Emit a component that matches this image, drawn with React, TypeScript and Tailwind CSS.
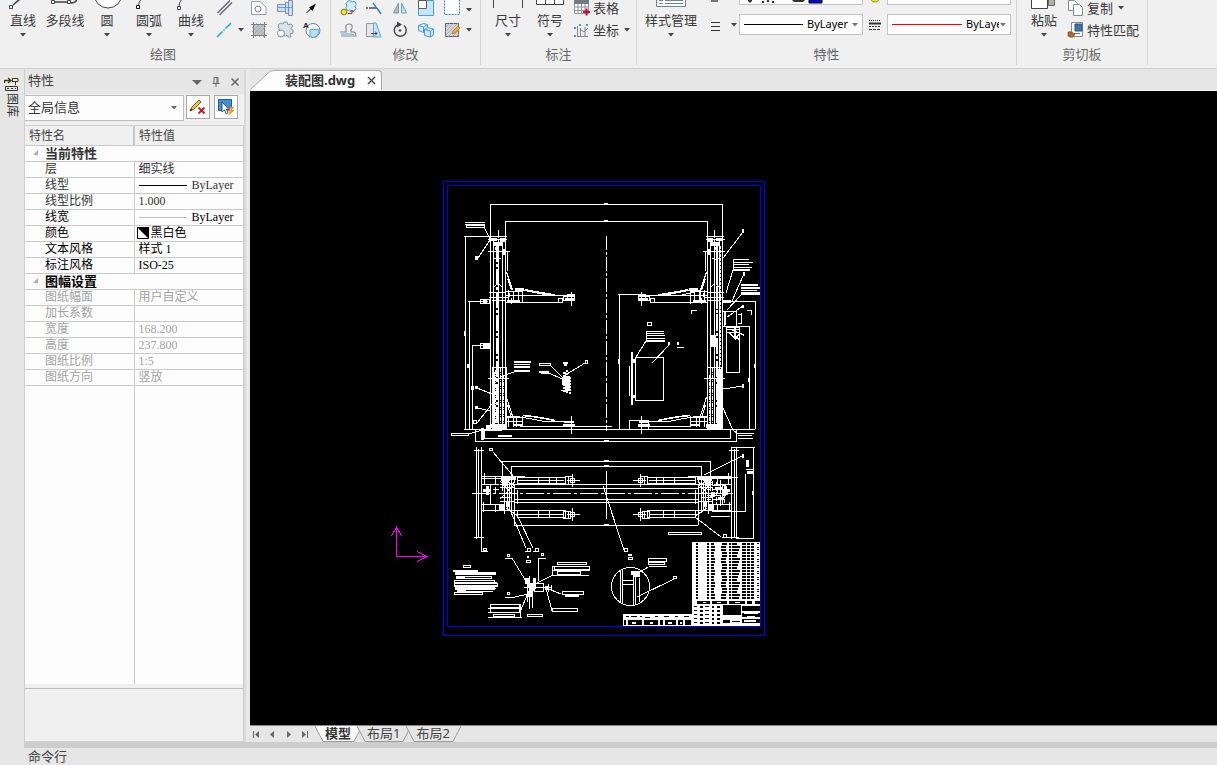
import React from "react";

type Kids = { children?: React.ReactNode };

const INK = "#3d4550";

function Caret({ className = "text-[#444]" }: { className?: string }) {
  return (
    <svg width="6" height="4" viewBox="0 0 6 4" className={`shrink-0 ${className}`} aria-hidden="true">
      <path d="M0 0h6L3 3.6z" fill="currentColor" />
    </svg>
  );
}

function Icon({ children }: Kids) {
  return (
    <svg width="20" height="20" viewBox="0 0 20 20" fill="none" className="block shrink-0" aria-hidden="true">
      {children}
    </svg>
  );
}

function Group({ title, children, className }: Kids & { title: string; className: string }) {
  return (
    <section className={`flex flex-col shrink-0 ${className}`}>
      <div className="flex h-11 items-start overflow-hidden">{children}</div>
      <h2 className="text-center text-[13px] leading-5 text-[#666]">{title}</h2>
    </section>
  );
}

function Divider() {
  return <div className="h-[65px] w-px shrink-0 bg-[#d4d4d4]" />;
}

function BigButton({ label, caret = true, wide = false, children }: Kids & { label: string; caret?: boolean; wide?: boolean }) {
  return (
    <button type="button" className={`flex shrink-0 flex-col items-center ${wide ? "w-[60px]" : "w-[42px]"}`}>
      <svg width="40" height="10" viewBox="0 0 40 10" fill="none" stroke={INK} className="block" aria-hidden="true">
        {children}
      </svg>
      <span className="whitespace-nowrap text-[13px] leading-[20px] text-[#3b3b3b]">{label}</span>
      <span className="mt-[3px]">{caret && <Caret />}</span>
    </button>
  );
}

function Tool({ label, children, caret }: Kids & { label: string; caret?: boolean }) {
  return (
    <button type="button" aria-label={label} className="flex h-5 items-center justify-center gap-1">
      <Icon>{children}</Icon>
      {caret && <Caret />}
    </button>
  );
}

function Hatch() {
  return <path d="M3 8l5-5M3 12l9-9M3 16l13-13M6 17l11-11M10 17l7-7M14 17l3-3" stroke="#9ba0a6" strokeWidth=".7" />;
}

function DrawGroup() {
  return (
    <Group title="绘图" className="w-[330px] pr-1">
      <div className="flex pl-0.5">
        <BigButton label="直线">
          <path d="M10 5l7-6" strokeWidth="1.6" />
          <path d="M6.500 5.500h3v3h-3z" fill="#fff" />
        </BigButton>
        <BigButton label="多段线" caret={false}>
          <path d="M10 2h12M26 3q5 0 6-4" strokeWidth="1.500" />
          <path d="M6.500.5h3v3h-3zM22.500.5h3v3h-3z" fill="#fff" />
        </BigButton>
        <BigButton label="圆">
          <circle cx="21" cy="-6" r="14" fill="#fff" />
        </BigButton>
        <BigButton label="圆弧">
          <path d="M9.500 6q0-4 3-7" />
          <path d="M7.500 5.500h3v3h-3z" fill="#fff" stroke="#111" />
        </BigButton>
        <BigButton label="曲线">
          <path d="M8 6q0-4 3-7" />
          <path d="M6.500 6.500h3v3h-3z" fill="#fff" />
        </BigButton>
      </div>
      <div className="flex">
        <div className="ml-0.5 flex w-8 flex-col items-start">
          <Tool label="平行线">
            <path d="M3.500 13L16 .5M5.500 15L18 2.500" stroke="#666b72" strokeWidth="1.500" />
          </Tool>
          <Tool label="中心线" caret>
            <path d="M3 17l5.500-5.500M9.500 10.500l1-1M11.500 8.500L17 3" stroke="#2aa5dc" strokeWidth="1.500" />
          </Tool>
        </div>
        <div className="grid grid-cols-[26px_26px_26px]">
          <Tool label="局部放大">
            <path d="M2.500 1.500H11l6 5.500v7.500H2.500z" fill="#fdfdfd" stroke="#9aa0a8" />
            <circle cx="9" cy="9" r="3" stroke="#7c838b" />
          </Tool>
          <Tool label="轴">
            <path d="M2.500 4.500h8v7h-8zM10.500 2.500h3v11h-3zM13.500.5h4v15h-4z" fill="#cfdcea" stroke="#7a92ad" />
            <path d="M2 7.500h15" stroke="#52a5e0" />
          </Tool>
          <Tool label="箭头">
            <path d="M5.500 13l6-6" stroke="#000" />
            <path d="M15 3.500L8 7.500l3.500 3.500z" fill="#000" />
          </Tool>
          <Tool label="剖面线">
            <path d="M4 4h12v12H4z" fill="#bfc2c5" />
            <Hatch />
            <path d="M4.500 2v16M15.500 2v16M2 4.500h16M2 15.500h16" stroke="#7c8288" />
          </Tool>
          <Tool label="齿轮">
            <path d="M4 4l2-1 2 1 1-2h3l1 3 3-1 2 2-2 2v1l2 1v3l-3 1 1 3h-3l-1-2-2 1-3-1 1-3-4-2V8L3 7z" fill="#d9e1e9" stroke="#8795a5" />
            <circle cx="6" cy="13.500" r="3.500" fill="#f6f8fa" stroke="#8795a5" />
          </Tool>
          <Tool label="文字">
            <circle cx="12" cy="10.500" r="7" fill="#f4f8fb" stroke="#74808c" />
            <path d="M9 9.500h9q0 7-6 8-3-1-3-2z" fill="#b5e0f7" stroke="#56a9d8" />
            <text x="2" y="8" fontSize="8" fontWeight="700" fontFamily="Liberation Sans" fill="#222">A</text>
          </Tool>
        </div>
      </div>
    </Group>
  );
}

function ModifyGroup() {
  return (
    <Group title="修改" className="w-[149px]">
      <div className="grid grid-cols-[26px_26px_26px_26px_36px] pl-1">
        <Tool label="复制">
          <path d="M9 6a3 3 0 015-4 2.500 2.500 0 013 4 3 3 0 01-5 4 2.500 2.500 0 01-3-4z" fill="#d8effb" stroke="#4b9bcb" />
          <circle cx="6" cy="12" r="2.800" fill="#ffe81a" stroke="#8c7a12" />
          <path d="M10 13.500h4V11M12.500 12l1.500-2 1.500 2" stroke="#a33" />
        </Tool>
        <Tool label="修剪">
          <path d="M2 8h2M5 8h8" stroke="#4a4f57" strokeWidth="1.500" />
          <path d="M9 3l3 4M13 8l4 6" stroke="#2f86c4" strokeWidth="1.500" />
        </Tool>
        <Tool label="镜像">
          <path d="M8.500 3v10h-5z" fill="#b9bec4" stroke="#8d939a" />
          <path d="M11.500 3v10h5z" fill="#bfe3f7" stroke="#5ba5cf" />
        </Tool>
        <Tool label="缩放">
          <path d="M2.500.5h15v15h-15z" fill="#c5e6f9" stroke="#4c9ccc" />
          <path d="M2.500.5h8v8h-8z" fill="#fff" stroke="#555b63" />
        </Tool>
        <Tool label="阵列" caret>
          <path d="M2.500-.5h15v15h-15z" fill="#fff" stroke="#318bc5" strokeDasharray="2 1" />
        </Tool>
        <Tool label="偏移">
          <path d="M2 12h6V9q-1-5 3-5t3 4l-1 2v2q5-1 5 4H3" stroke="#858c94" strokeWidth="1.200" />
          <path d="M3 14h9q3 0 4 1" stroke="#5aa9d6" />
        </Tool>
        <Tool label="拉伸">
          <path d="M9 3h3l5 14H9z" fill="#c5e6f9" stroke="#5ba5cf" />
          <path d="M2.500 3.500h7v13h-7z" fill="#e3e6e9" stroke="#9199a2" />
          <path d="M7 13.500h6M11 11.500l2 2-2 2" stroke="#3f4750" />
        </Tool>
        <Tool label="旋转">
          <path d="M7 5.200A6 6 0 1014 5.500" stroke="#3f434a" strokeWidth="1.400" />
          <path d="M7 1.500l5 3-5 3z" fill="#3f434a" />
          <circle cx="10" cy="10.500" r="1.300" fill="#3f434a" />
        </Tool>
        <Tool label="分解">
          <path d="M2.500 5.500l5-2 4 1v5l-4 3-5-2zM2.500 5.500l5 1.500 4-2.500M7.500 7v5" fill="#cdeafa" stroke="#4b9bcb" />
          <path d="M8.500 9.500l3-2 6 1.500v6l-3 2-6-1.500zM8.500 9.500l6 1.500 3-2M14.500 11v6" fill="#cdeafa" stroke="#4b9bcb" />
        </Tool>
        <Tool label="编辑剖面线" caret>
          <path d="M3.500 3.500h13v13h-13z" fill="#d4d6d8" stroke="#5c6269" />
          <Hatch />
          <path d="M10 14l1-3 5-5 2 2-5 5z" fill="#f3a52c" stroke="#b16b16" strokeWidth=".6" />
        </Tool>
      </div>
    </Group>
  );
}

function TextTool({ label, caret, children }: Kids & { label: string; caret?: boolean }) {
  return (
    <button type="button" className="flex h-5 items-start gap-px whitespace-nowrap text-[13px] leading-4 text-[#3b3b3b]">
      <Icon>{children}</Icon>
      <span>{label}</span>
      {caret && <span className="ml-1 flex h-4 items-center"><Caret /></span>}
    </button>
  );
}

function AnnotateGroup() {
  return (
    <Group title="标注" className="w-[155px]">
      <div className="flex pl-1.5">
        <BigButton label="尺寸">
          <path d="M5.500 0v8M34.500 0v8" />
        </BigButton>
        <BigButton label="符号">
          <path d="M6.500-3.500h27v8h-27zM15.500-3v7M24.500-3v7" fill="#fff" />
        </BigButton>
      </div>
      <div className="ml-px flex h-[42px] flex-col items-start justify-between">
        <TextTool label="表格">
          <path d="M2.500.5h14v13h-14z" fill="#fff" stroke="#8f959c" />
          <path d="M2 0h15v4H2z" fill="#747a82" />
          <path d="M2 7h15M2 10.500h15M6 4v9M9.500 4v9M13 4v9" stroke="#8f959c" />
          <path d="M11 12h7M14.500 8.500v7" stroke="#c8102e" strokeWidth="2" />
        </TextTool>
        <TextTool label="坐标" caret>
          <path d="M5.500 4v10M5 14.500h11M8.500 6v8M13 5v9M8 7l4 3 4-4" stroke="#7f868e" />
          <path d="M2 5l2 2M2 7l2-2M7 2l2 2M7 4l2-2M14 2l2 2M14 4l2-2M2 13l2 2M2 15l2-2" stroke="#3f9bd0" />
        </TextTool>
      </div>
    </Group>
  );
}

function LineCombo({ label, color, clip }: { label: string; color: string; clip?: boolean }) {
  return (
    <label className="flex h-[21px] w-[124px] items-center border border-[#c3c3c3] bg-[#fdfdfd] pl-1 pr-1">
      <span className={`h-px shrink-0 ${clip ? "w-[70px]" : "w-[59px]"} ${color}`} />
      <select aria-label={label} className={`ml-1 h-[18px] shrink-0 appearance-none overflow-hidden bg-transparent text-[11px] text-black outline-none ${clip ? "w-[33px]" : "w-[44px]"}`}>
        <option>ByLayer</option>
      </select>
      <span className="ml-auto flex"><Caret className="text-[#777]" /></span>
    </label>
  );
}

function PropertyGroup() {
  return (
    <Group title="特性" className="w-[379px]">
      <div className="flex pl-1">
        <BigButton label="样式管理" wide>
          <path d="M5.500-5.500h29v12h-29z" fill="#fdfdfd" stroke="#70839c" />
          <path d="M8 .5h4M14 .5h18M8 3.500h4M14 3.500h18" stroke="#70839c" />
        </BigButton>
      </div>
      <div className="flex h-10 w-9 flex-col justify-between pl-1">
        <svg width="20" height="5" viewBox="0 0 20 5" aria-hidden="true"><path d="M6 0h7v2H6z" fill="#777" /></svg>
        <button type="button" aria-label="线宽" className="mb-[5px] flex items-center gap-1.5">
          <svg width="20" height="20" viewBox="0 0 20 20" stroke="#333"><path d="M6 7.500h9M6 11.500h9M6 15.500h9" /></svg>
          <Caret />
        </button>
      </div>
      <div className="ml-[2px] flex flex-col gap-[9px]">
        <button type="button" aria-label="图层" className="block h-[5px] w-[124px] overflow-hidden border border-t-0 border-[#c3c3c3] bg-[#fdfdfd]">
          <svg width="120" height="4" viewBox="0 0 120 4" className="block">
            <path d="M8 0h4v1l-2 2-2-2zM22 1h2v2h-2zM27 0h2v2h-2zM32 1h2v2h-2zM52 0h13l-2 2h-9z" fill="#333" />
            <path d="M69 0h13v3H69z" fill="#00f" stroke="#000" />
          </svg>
        </button>
        <LineCombo label="线型" color="bg-black" />
      </div>
      <div className="flex w-6 flex-col items-center gap-2">
        <svg width="12" height="6" viewBox="0 0 12 6" aria-hidden="true"><path d="M1 -3a5 5 0 0010 0z" fill="#ffe81a" stroke="#9b8a2b" /></svg>
        <svg width="14" height="20" viewBox="0 0 14 20" className="block" stroke="#333" aria-hidden="true">
          <path d="M1 6.500h12" strokeDasharray="1 1" /><path d="M1 9.500h12" strokeWidth="2" /><path d="M1 12.500h12" strokeDasharray="2 1" /><path d="M1 15.500h12" strokeDasharray="3 1" />
        </svg>
      </div>
      <div className="flex flex-col gap-[9px]">
        <div className="h-[5px] w-[124px] border border-t-0 border-[#c3c3c3] bg-[#fdfdfd]" />
        <LineCombo label="颜色" color="bg-[#f00]" clip />
      </div>
    </Group>
  );
}

function ClipboardGroup() {
  return (
    <Group title="剪切板" className="w-[130px]">
      <div className="flex pl-1.5">
        <BigButton label="粘贴">
          <path d="M24.500-4.500h6v10h-6z" fill="#b9ad9e" stroke="#666" />
          <path d="M7.500-4.500h16v13h-16z" fill="#fff" />
        </BigButton>
      </div>
      <div className="ml-px flex h-[42px] flex-col items-start justify-between">
        <TextTool label="复制" caret>
          <path d="M2.500.5h6l3 3v7h-9z" fill="#fff" stroke="#868c94" />
          <path d="M7.500 4.500h6l3 3v8h-9z" fill="#fff" stroke="#868c94" />
        </TextTool>
        <TextTool label="特性匹配">
          <path d="M5.500.5h11v14h-11z" fill="#f7f8f9" stroke="#868c94" />
          <path d="M9 2h7v7H9z" fill="#3d74ad" stroke="#2c5582" />
          <path d="M8 11.500h6" stroke="#6b7179" />
          <path d="M2 10q3-1 5 1l2 1-2 3q-3 1-5-1z" fill="#b5682d" stroke="#7a3e12" strokeWidth=".6" />
        </TextTool>
      </div>
    </Group>
  );
}

type Row = { name: string; value?: React.ReactNode; tone?: "mid" | "dark" | "off"; section?: boolean };

const line = (thick: boolean) => (
  <span className="flex items-center gap-[5px]">
    <span className={`h-px w-12 ${thick ? "bg-black" : "bg-[#bbb]"}`} />
    ByLayer
  </span>
);

const rows: Row[] = [
  { name: "当前特性", section: true, tone: "mid" },
  { name: "层", value: "细实线", tone: "mid" },
  { name: "线型", value: line(true), tone: "mid" },
  { name: "线型比例", value: "1.000", tone: "mid" },
  { name: "线宽", value: line(false), tone: "dark" },
  {
    name: "颜色",
    tone: "dark",
    value: (
      <span className="-ml-0.5 flex items-center gap-0.5">
        <svg width="12" height="12" viewBox="0 0 12 12" aria-hidden="true">
          <path d="M.5.5h11v11H.5z" fill="#fff" stroke="#000" /><path d="M0 0h12v12z" fill="#000" />
        </svg>
        黑白色
      </span>
    ),
  },
  { name: "文本风格", value: "样式 1", tone: "dark" },
  { name: "标注风格", value: "ISO-25", tone: "dark" },
  { name: "图幅设置", section: true, tone: "dark" },
  { name: "图纸幅面", value: "用户自定义", tone: "off" },
  { name: "加长系数", tone: "off" },
  { name: "宽度", value: "168.200", tone: "off" },
  { name: "高度", value: "237.800", tone: "off" },
  { name: "图纸比例", value: "1:5", tone: "off" },
  { name: "图纸方向", value: "竖放", tone: "off" },
];

const tones = { mid: "text-[#333]", dark: "text-black", off: "text-[#a3a3a3]" };

function PropertyPanel() {
  return (
    <aside className="flex w-[220px] shrink-0 flex-col border-l border-[#cfcfcf]">
      <header className="flex h-[25px] items-center pb-0.5 pl-[3px] pr-1 text-[#666]">
        <h2 className="text-[13px] text-[#444]">特性</h2>
        <div className="ml-auto flex items-center gap-[9px] pt-0.5">
          <button type="button" aria-label="菜单"><svg width="10" height="10" viewBox="0 0 10 10"><path d="M0 3h10L5 8z" fill="currentColor" /></svg></button>
          <button type="button" aria-label="固定"><svg width="10" height="10" viewBox="0 0 10 10" fill="none" stroke="currentColor"><path d="M3 6V.5h4V6M6 1v5M1.500 6.500h7M5 7v3" /></svg></button>
          <button type="button" aria-label="关闭"><svg width="10" height="10" viewBox="0 0 10 10" stroke="currentColor" strokeWidth="1.500"><path d="M1.500 1.500l7 7M8.500 1.500l-7 7" /></svg></button>
        </div>
      </header>
      <div className="flex h-[31px] items-start gap-0.5 bg-[#f0f0f0] pt-px">
        <label className="flex h-[26px] w-[159px] items-center border border-l-0 border-[#bdbdbd] bg-[#fdfdfd] pl-[3px] pr-1.5">
          <select aria-label="选择对象" className="h-5 w-full appearance-none bg-transparent text-[13px] text-[#333] outline-none">
            <option>全局信息</option>
          </select>
          <Caret className="text-[#666]" />
        </label>
        <button type="button" aria-label="清除选择" className="flex h-6 w-6 items-center justify-center border border-[#a9a9a9] bg-[#fdfdfd]">
          <svg width="18" height="18" viewBox="0 0 18 18">
            <path d="M1 13l2-4 7-7 2 2-7 7z" fill="#f6c445" stroke="#7a5718" /><path d="M1 13l1-2.500L3.500 12z" fill="#222" />
            <path d="M9.500 9.500l6 6M15.500 9.500l-6 6" stroke="#c81e1e" strokeWidth="1.800" />
          </svg>
        </button>
        <button type="button" aria-label="快速选择" className="ml-0.5 flex h-6 w-6 items-center justify-center border border-[#a9a9a9] bg-[#fdfdfd]">
          <svg width="18" height="18" viewBox="0 0 18 18">
            <path d="M1.500 1.500h13v11h-13z" fill="#3e8edb" stroke="#1f5d9e" />
            <path d="M5 4v10l2.500-2 1.500 4 2-1-1.500-3.500H12z" fill="#fff" stroke="#333" strokeWidth=".8" />
            <path d="M14 9l-3 4h2l-1 4 5-5h-2.500l2-3z" fill="#ffa31a" stroke="#d97a06" strokeWidth=".5" />
          </svg>
        </button>
      </div>
      <div className="flex min-h-0 flex-1 flex-col border-r border-t border-[#cfcfcf] bg-[#fdfdfd]">
        <table className="w-full table-fixed border-collapse text-[12px] leading-[15px] [font-family:'Liberation_Serif','Noto_Sans_CJK_SC',serif]">
          <colgroup>
            <col className="w-[109px]" />
            <col />
          </colgroup>
          <thead>
            <tr className="h-[19px] bg-[#f0f0f0] text-left text-[#444]">
              <th className="border-b border-r-2 border-[#c6c6c6] p-0 pl-1 pt-[3px] font-normal">特性名</th>
              <th className="border-b border-[#c6c6c6] p-0 pl-1 pt-[3px] font-normal">特性值</th>
            </tr>
          </thead>
          <tbody>
            {rows.map((r) =>
              r.section ? (
                <tr key={r.name} className="h-4 border-b border-[#c9c9c9]">
                  <th colSpan={2} className={`p-0 pl-2 text-left text-[13px] font-bold leading-[15px] ${tones[r.tone ?? "mid"]}`}>
                    <span className="flex items-center gap-1.5">
                      <svg width="6" height="6" viewBox="0 0 6 6" className="shrink-0" aria-hidden="true"><path d="M5 0v5H0z" fill="#aaa" /></svg>
                      {r.name}
                    </span>
                  </th>
                </tr>
              ) : (
                <tr key={r.name} className={`h-4 border-b border-[#c9c9c9] ${tones[r.tone ?? "mid"]}`}>
                  <td className="border-r border-[#c9c9c9] p-0 pl-5">{r.name}</td>
                  <td className="p-0 pl-1">{r.value}</td>
                </tr>
              ),
            )}
          </tbody>
        </table>
        <div className="flex-1"><div className="h-full w-[110px] border-r border-[#c9c9c9]" /></div>
      </div>
      <div className="h-[58px] shrink-0 border-b border-r border-[#cfcfcf] bg-[#f0f0f0] pt-1"><div className="h-px bg-[#bdbdbd]" /></div>
    </aside>
  );
}

const W = "#fff";

type Box = [number, number, number, number];
const fills = (list: Box[], color = W) => list.map(([x, y, w, h], i) => <rect key={i} x={x} y={y} width={w} height={h} fill={color} stroke="none" />);
const outlines = (list: Box[]) => list.map(([x, y, w, h], i) => <rect key={i} x={x + 0.5} y={y + 0.5} width={w - 1} height={h - 1} />);

/* Parts that repeat on both sides of the lift's axis. */
function FrontHalf() {
  return (
    <g>
      <path d="M490.500 204v226M505.500 221v209M493.500 240v190M498.500 240v190M502.500 246v183M507.500 251v20" />
      <path d="M496.500 246v183" strokeDasharray="16 2 3 2" strokeWidth="2" />
      <path d="M488 239.500h19M489 236.500h18M488 251.500h22M498.500 230v8M489 292.500h16M489 297.500h20M492 300.500h14" />
      {fills([[490, 238, 7, 3], [500, 238, 6, 4], [493, 242, 10, 4], [495, 247, 4, 3], [503, 249, 3, 6]])}
      <path d="M493.500 258q5 3 9-1M493 288q5-7 10 0" strokeDasharray="2 1" />
      <path d="M506.500 272l6 18M507.500 279l4 11" />
      <path d="M506 291.500h16M506 302.500h52M522 295.500h45M522.500 289v14M518.500 289v13M515 290.500h10M513.500 291v11M508.500 290v13M525 289.500l32 6M524 290.500l26 5M506 295.500h16M511.500 298v6" />
      {fills([[507, 300, 13, 2], [515, 288, 9, 2], [508, 293, 2, 4], [566, 295, 8, 2], [565, 298, 10, 2]])}
      {outlines([[558, 298, 5, 5], [563, 296, 5, 5], [567, 294, 8, 7]])}
      <path d="M571.500 292v14M524 302.500h33" />
      <path d="M525 290l30 5" strokeWidth="1.600" />
      <g>
        <path d="M506 417.500h17q12 2 22 4h28M523 426.500h45M522.500 416v11M516.500 417v10M513.500 418v9M508.500 418v9M506 421.500h16M571.500 416v18M506.500 397l6 19M507.500 405l4 13M508.500 402v8" />
        <path d="M523 415.500q13 1 32 5" strokeWidth="1.600" />
        {fills([[506, 416, 14, 2], [564, 421, 10, 2], [563, 424, 12, 3], [513, 424, 9, 2], [491, 424, 16, 4]])}
      </g>
      <path d="M492 367.500h14v61h-14zM488 378.500h21M494 372v54" />
      <path d="M495.500 370v56M500.500 368v60M503.500 375v50" strokeDasharray="4 1 1 1" />
    </g>
  );
}

function PlanHalf() {
  return (
    <g>
      <path d="M476.500 447v92M481.500 447v92M474 450.500h10M474 537.500h10M478.500 449v88" />
      <path d="M481 476.500h44M481 478.500h20M481 484.500h18M481 504.500h19M481 510.500h38M484.500 473v12M490.500 484v20M483.500 502v10M495.500 476v8M495.500 504v8M504.500 476v38M507.500 480v28M511.500 482v31M502.500 461v30M511.500 466v45M514.500 484v41M517.500 490v14M500 487.500h15M500 497.500h12M500 484.500h14M500 501.500h14M509.500 484v26M506 493.500h12" />
      {fills([[501, 477, 9, 4], [503, 481, 4, 5], [499, 504, 6, 7], [506, 501, 4, 6], [483, 489, 8, 3], [486, 486, 3, 9], [510, 477, 6, 3]])}
      <path d="M493 489.500h6M495.500 487v6M500 499l14-14M500 481l12 13M506 508l12 8" />
      <circle cx="511.500" cy="480.500" r="3" />
      {outlines([[517, 477, 49, 7], [565, 476, 8, 9], [517, 510, 49, 8], [563, 511, 8, 8]])}
      <path d="M518 480.500h46M538.500 477v7M549.500 477v7M556.500 477v7M518 514.500h46M538.500 510v8M549.500 510v8M567 480.500h13M572.500 474v13M567 514.500h13M572.500 508v13M568.500 476v8M568.500 511v8" />
      <path d="M517 517.500h48M517 483.500h48" />
      <circle cx="572.500" cy="480.500" r="2.500" />
      <circle cx="572.500" cy="514.500" r="2.500" />
    </g>
  );
}

const partRows = Array.from({ length: 19 }, (_, i) => i);
const titleRows = Array.from({ length: 5 }, (_, i) => i);

function PartsTable() {
  return (
    <g>
      {fills([[692, 542, 69, 84], [623, 614, 70, 12]])}
      {partRows.map((r) => {
        const y = 543 + r * 3;
        const jitter = (r * 7) % 4;
        return (
          <g key={r}>
            {fills(
              [
                [696, y, 2, 2],
                [707, y, 2, 2],
                [711, y, 3 + (jitter >> 1), 2],
                [722 - (jitter >> 1), y, 5, 2],
                [729, y, 2, 2],
                [732, y, 5 + jitter, 2],
                [742, y, 4, 2],
                [747, y, 3, 2],
                [751, y, 3, 2],
                [757, y + (r % 2), 2, 1],
              ],
              "#000",
            )}
          </g>
        );
      })}
      {fills([[697, 601, 13, 3], [712, 601, 15, 3], [729, 601, 16, 3], [747, 601, 5, 3], [755, 601, 5, 3], [723, 605, 18, 10], [742, 606, 18, 5], [742, 613, 18, 4], [742, 619, 18, 4], [723, 620, 7, 3], [732, 621, 8, 1]], "#000")}
      {fills([[703, 602, 3, 1], [717, 602, 4, 1], [735, 602, 5, 1], [744, 613, 14, 1], [747, 616, 8, 1], [744, 620, 12, 2]])}
      {titleRows.map((r) => (
        <g key={r}>
          {fills([[694, 606 + r * 4, 3, 1], [700, 606 + r * 4, 3, 2], [705, 606 + r * 4, 4, 1], [712, 606 + r * 4, 2, 2], [717, 606 + r * 4, 3, 2]], "#000")}
        </g>
      ))}
      {fills([[626, 616, 3, 1], [631, 616, 6, 1], [640, 616, 2, 1], [645, 617, 5, 1], [655, 616, 3, 1], [664, 616, 5, 1], [675, 616, 3, 1], [684, 616, 5, 1], [624, 620, 2, 5], [628, 620, 14, 5], [644, 620, 14, 5], [660, 620, 3, 5], [665, 620, 11, 5], [678, 620, 5, 5], [685, 620, 6, 5]], "#000")}
      {fills([[632, 622, 4, 2], [650, 622, 3, 2], [668, 622, 4, 2], [680, 622, 2, 2]])}
    </g>
  );
}

function Drawing() {
  return (
    <svg width="520" height="560" viewBox="250 91 520 560" className="block max-w-none" fill="none" stroke={W} strokeWidth="1" shapeRendering="crispEdges" role="img" aria-label="装配图">
      <g stroke="#00f">
        <rect x="443.500" y="181.500" width="321" height="454" />
        <rect x="447.500" y="185.500" width="313" height="441" />
      </g>

      <path d="M490 204.500h233M505 221.500h202M604 203.500h4M604 220.500h4" />
      <path d="M606.500 236v195" strokeDasharray="14 2 3 2" />
      <FrontHalf />
      <g transform="translate(1213 0) scale(-1 1)"><FrontHalf /></g>
      <path d="M464 429.500h291M520 426.500h92M484 438.500h247M475 441.500h262M475.500 430v11M484.500 430v8M730.500 430v8M736.500 430v11M604 438.500h4" />
      {fills([[481, 428, 3, 12], [484, 429, 18, 2], [710, 335, 6, 12], [498, 435, 14, 2], [486, 425, 5, 5], [717, 369, 4, 60], [604, 440, 5, 1]])}
      <path d="M719.500 246v120M716.500 250v80" strokeDasharray="3 1" strokeWidth="2" />

      <path d="M465.500 236v194M464 236.500h26M469.500 301v129M468 301.500h20M472.500 345v84M472 345.500h16" />
      {outlines([[480, 299, 10, 5], [480, 343, 10, 6], [466, 225, 19, 3], [451, 433, 18, 3], [473, 420, 4, 4]])}
      {fills([[465, 222, 20, 1], [465, 224, 20, 1], [483, 300, 4, 3], [483, 344, 7, 4], [464, 331, 2, 5], [467, 364, 2, 4], [471, 386, 3, 4], [475, 256, 3, 4], [475, 386, 3, 3], [475, 406, 3, 3]])}
      <path d="M484 227l7 14M478 258l12-18M477 388l15 6M477 408l14 3M477 423l15-19M468 434l15-4M514 372l-14 5" />

      {fills([[514, 361, 17, 2], [514, 364, 16, 1], [514, 366, 16, 2], [514, 370, 16, 2], [539, 371, 10, 2], [541, 373, 8, 1], [563, 362, 5, 2], [564, 364, 3, 2], [562, 378, 6, 7], [566, 376, 4, 14]])}
      {outlines([[539, 363, 12, 3], [585, 360, 3, 4]])}
      <path d="M551 366l13 13M549 373l13 6M585 363l-18 11" />
      <path d="M563.500 372v20M566.500 370v23M569.500 377v18" strokeDasharray="2 1" strokeWidth="2" />
      <path d="M561 390.500h9M562 377.500h9M565.500 372v20" />

      <path d="M619.500 294v136M618 294.500h26M617 429.500h4" />
      {outlines([[635, 357, 29, 44], [647, 322, 5, 4], [629, 420, 20, 10]])}
      {fills([[631, 352, 2, 53], [629, 366, 1, 30], [633, 359, 3, 4], [633, 395, 3, 3], [646, 331, 18, 1], [647, 333, 17, 1], [646, 335, 19, 1], [647, 338, 18, 1], [646, 340, 19, 2], [646, 331, 1, 10], [668, 342, 2, 3], [677, 342, 2, 3], [677, 347, 7, 1], [618, 359, 2, 5]])}
      <path d="M646 341l-10 16M652 363l17-18M691.500 314v-4h5M747 310.500h4v4" />

      <path d="M723 258l20-26M733 270l-7 23M743 276l-11 25M741 295l-14 15M727 317l16-11M723 389l20-3M723 408l10 22 5 4" />
      {fills([[742, 229, 2, 4], [733, 259, 16, 1], [733, 259, 1, 11], [733, 262, 20, 1], [734, 264, 15, 1], [733, 267, 19, 1], [733, 269, 17, 2], [743, 272, 2, 4], [741, 284, 17, 2], [741, 287, 19, 2], [741, 290, 16, 1], [741, 292, 19, 3], [742, 305, 2, 3], [742, 384, 2, 4], [738, 433, 16, 1], [738, 435, 14, 1], [738, 438, 15, 1], [731, 447, 24, 1], [754, 364, 2, 4], [748, 378, 2, 4], [722, 300, 9, 3]])}
      <path d="M722 301.500h33M755.500 301v128M722 326.500h28M749.500 326v103M722 311.500h15M724.500 311v15M736.500 311v15M741.500 313v10M738 314.500h4M738 323.500h4" />
      {outlines([[726, 327, 14, 46]])}
      <path d="M727 329.500h12M727 332.500h12M729 333l7 6M735 327v10M732 330l12 5M740 334l-6 5M734 336l6 4" strokeWidth="1.400" />
      <path d="M680 295.500l20-5M690.500 290v14M700.500 290v10M725.500 311v14" />

      <PlanHalf />
      <g transform="translate(1213 0) scale(-1 1)"><PlanHalf /></g>
      <path d="M502 461.500h209M511 466.500h191M514 484.500h184M514 488.500h184M514 499.500h184M514 502.500h184M514 525.500h184M606.500 471v48M604 460.500h5M604 465.500h5M604 524.500h5" />
      <path d="M472 493.500h265" strokeDasharray="18 3 3 3" />
      <path d="M731 447.500h23M753.500 447v92M737 538.500h17M745.500 474v37M712 511.500h34M711 516.500h19M703 477.500h35" />
      <path d="M707 485.500h20M707 489.500h18M707 495.500h20M707 499.500h16M712.500 482v24M716.500 482v22M720.500 480v26M724.500 484v20" strokeDasharray="4 1" />
      {fills([[715, 487, 8, 3], [722, 491, 6, 4], [711, 492, 4, 5], [718, 497, 6, 3], [746, 460, 3, 7], [746, 469, 8, 1], [747, 471, 7, 3], [742, 454, 2, 4], [752, 491, 2, 4]])}
      {outlines([[668, 532, 34, 3], [489, 448, 4, 3]])}
      <path d="M493 452l21 25M704 475l38-19M695 517l26 20M511 512l15 36M517 515l16 33M603 486l21 64M481.500 539v12M481 551.500h7M525 551.500h5M533 551.500h5M722 537.500h7" />
      {outlines([[483, 548, 4, 3], [527, 548, 4, 4], [535, 548, 4, 4], [624, 548, 4, 4], [723, 534, 4, 4], [463, 565, 8, 3]])}

      {fills([[453, 570, 25, 2], [455, 572, 41, 2], [456, 576, 36, 1], [456, 577, 9, 2], [454, 580, 41, 1], [454, 582, 43, 2], [455, 585, 42, 1], [455, 588, 41, 1], [457, 590, 9, 2], [465, 591, 28, 1]])}
      {outlines([[455, 572, 41, 3], [456, 576, 36, 3], [454, 580, 41, 3], [454, 583, 44, 4], [455, 587, 40, 3], [454, 592, 29, 3]])}
      {outlines([[557, 562, 30, 3], [554, 566, 36, 4], [557, 571, 24, 4], [562, 591, 22, 4], [552, 608, 26, 4], [490, 604, 30, 4], [490, 608, 30, 5], [493, 614, 22, 3], [527, 614, 16, 3], [507, 554, 3, 3], [541, 553, 3, 3], [507, 592, 3, 3], [526, 560, 5, 3], [628, 557, 5, 3]])}
      {fills([[553, 566, 36, 1], [553, 570, 37, 1], [553, 575, 36, 1], [565, 595, 14, 2], [488, 608, 33, 1], [488, 612, 33, 1], [488, 617, 34, 1], [527, 556, 2, 2], [628, 554, 4, 2], [505, 558, 7, 1], [538, 558, 8, 1], [505, 597, 10, 1]])}
      <path d="M512 558l15 25M538.500 558v23M553 575l-18 9M561 594l-15-6M552 611l-6-23M515 597l13-3M520 612l8-19M520.500 604v13M552.500 566v10" />
      {fills([[525, 578, 4, 6], [527, 583, 9, 4], [530, 586, 5, 5], [528, 591, 5, 6], [533, 578, 3, 5], [545, 586, 4, 4]])}
      <path d="M529.500 576v33M532.500 585v23M527.500 582v20M534 583.500h9v8h-9M524 587.500h28M526 581l10 8M548.500 584v8M551.500 585v6M540 587.500h6" />

      <circle cx="630.500" cy="586.500" r="19" />
      <path d="M620.500 571v31M622.500 569v35M633.500 573v32M635.500 576v29M639.500 578v24M622 580.500h12M622 584.500h12M640 572l8-5M637 597l37-18M649 566.500h18" />
      {fills([[631, 571, 9, 4], [633, 574, 7, 3]])}
      {outlines([[648, 558, 19, 4], [648, 562, 17, 3], [673, 576, 4, 3]])}
      <PartsTable />
      <path d="M760.500 542v85M623 626.500h138" stroke="#00f" />

      <path d="M396.500 527v29.500H427M391.500 536l5-9 5 9M417 551.500l10 5-10 5" stroke="#f0f" />
    </svg>
  );
}

function SheetTab({ label, active }: { label: string; active?: boolean }) {
  return (
    <button type="button" className={`-mr-1.5 flex h-4 shrink-0 ${active ? "font-bold text-[#333]" : "text-[#444]"}`}>
      <svg width="9" height="16" viewBox="0 0 9 16" className="shrink-0" aria-hidden="true">
        <path d="M0 0l8 15.500h1V0z" fill={active ? "#fff" : "#e6e6e6"} /><path d="M0 0l8 15.500h1" fill="none" stroke="#999" />
      </svg>
      <span className={`border-b border-[#999] px-px text-[13px] leading-[15px] ${active ? "bg-white" : ""}`}>{label}</span>
      <svg width="11" height="16" viewBox="0 0 11 16" className="shrink-0" aria-hidden="true">
        <path d="M10 0L2 15.500H0V0z" fill={active ? "#fff" : "#e6e6e6"} /><path d="M10 0L2 15.500H0" fill="none" stroke="#999" />
      </svg>
    </button>
  );
}

function NavButton({ label, d }: { label: string; d: string }) {
  return (
    <button type="button" aria-label={label}>
      <svg width="8" height="8" viewBox="0 0 8 8" className="block" fill="#666"><path d={d} /></svg>
    </button>
  );
}

export default function App() {
  return (
    <div className="flex h-screen flex-col overflow-hidden bg-[#e6e6e6] [font-family:'Noto_Sans','Noto_Sans_CJK_SC',sans-serif]">
      <div className="flex h-[69px] shrink-0 overflow-hidden border-b border-[#d0d0d0] bg-[#f0f0f0]">
        <DrawGroup />
        <Divider />
        <ModifyGroup />
        <Divider />
        <AnnotateGroup />
        <Divider />
        <PropertyGroup />
        <Divider />
        <ClipboardGroup />
        <Divider />
      </div>

      <div className="flex min-h-0 flex-1">
        <nav className="w-6 shrink-0 pl-1 pt-2">
          <button type="button" className="flex flex-col items-center">
            <svg width="16" height="16" viewBox="0 0 16 16" fill="none" stroke="#333" aria-hidden="true">
              <path d="M0 0h16v8H0z" fill="#f3f0d6" stroke="none" />
              <path d="M.5 6V3.500H6M4 1l3 2.500L4 6" strokeWidth="1.300" /><path d="M8.500 1v4M9 1.500h5v3H9M11.500 4v4" />
              <path d="M1.500 9.500h12v4h-12zM3 11.500h2M7 11.500h2M11 11.500h1" />
            </svg>
            <span className="text-[12px] leading-4 text-[#333] [text-orientation:sideways] [writing-mode:vertical-rl]">图库</span>
          </button>
        </nav>

        <div className="flex min-w-0 flex-1 flex-col">
          <div className="flex min-h-0 flex-1">
            <PropertyPanel />
            <div className="w-1.5 shrink-0 border-l-2 border-[#dadada] bg-[#e9e9e9]" />
            <main className="flex min-w-0 flex-1 flex-col">
              <div className="flex h-[22px] shrink-0 items-end border-b border-[#f5f5f5]">
                <svg width="24" height="20" viewBox="0 0 24 20" className="shrink-0" aria-hidden="true">
                  <path d="M0 20L17 4q4-4 7-3.500V20z" fill="#fdfdfd" /><path d="M0 20L17 4q4-4 7-3.500" fill="none" stroke="#aaa" />
                </svg>
                <div className="flex h-5 items-center gap-3 rounded-tr-sm border-r border-t border-[#aaa] bg-[#fdfdfd] pl-[11px] pr-[5px]">
                  <span className="whitespace-nowrap text-[13px] font-bold text-[#333]">装配图.dwg</span>
                  <button type="button" aria-label="关闭文件">
                    <svg width="9" height="9" viewBox="0 0 9 9" stroke="#444" strokeWidth="1.400" className="block"><path d="M1 1l7 7M8 1L1 8" /></svg>
                  </button>
                </div>
              </div>
              <div className="min-h-0 flex-1 overflow-hidden bg-black"><Drawing /></div>
              <div className="flex h-[17px] shrink-0 items-start border-t border-[#888]">
                <div className="flex h-4 items-center gap-2 pl-[3px]">
                  <NavButton label="首页" d="M0 1h1v7H0zM6 1v7L2 4.500z" />
                  <NavButton label="上一页" d="M5 1v7L1 4.500z" />
                  <NavButton label="下一页" d="M2 1v7l4-3.500z" />
                  <NavButton label="末页" d="M1 1v7l4-3.500zM6 1h1v7H6z" />
                </div>
                <div className="ml-1.5 flex">
                  <SheetTab label="模型" active />
                  <SheetTab label="布局1" />
                  <SheetTab label="布局2" />
                </div>
              </div>
            </main>
          </div>
          <div className="h-1.5 shrink-0 bg-[#cdcdcd]" />
          <div className="h-[17px] shrink-0 pl-1 text-[13px] leading-[17px] text-[#444]">命令行</div>
        </div>
      </div>
    </div>
  );
}
